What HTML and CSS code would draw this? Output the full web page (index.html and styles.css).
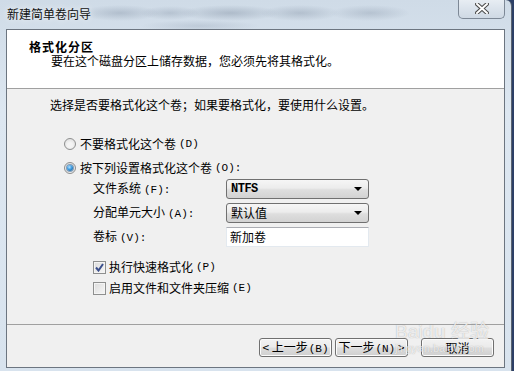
FILE: index.html
```html
<!DOCTYPE html>
<html lang="zh-CN">
<head>
<meta charset="utf-8">
<title>新建简单卷向导</title>
<link rel="stylesheet" href="styles.css">
</head>
<body>
<div class="win">
  <div class="titlebar">
    <span class="title">新建简单卷向导</span>
    <div class="close">
      <svg width="14" height="11" viewBox="0 0 14 11">
        <path d="M2 1 L12 10 M12 1 L2 10" stroke="#4a4a4a" stroke-width="4" stroke-linecap="square"/>
        <path d="M2 1 L12 10 M12 1 L2 10" stroke="#ffffff" stroke-width="2" stroke-linecap="square"/>
      </svg>
    </div>
  </div>
  <div class="client">
    <div class="header">
      <div class="h-title">格式化分区</div>
      <div class="h-sub">要在这个磁盘分区上储存数据，您必须先将其格式化。</div>
    </div>
    <div class="content">
      <p class="question">选择是否要格式化这个卷；如果要格式化，要使用什么设置。</p>
      <div class="opt-row r1"><span class="radio"></span>不要格式化这个卷<span class="ak">(D)</span></div>
      <div class="opt-row r2"><span class="radio checked"></span>按下列设置格式化这个卷<span class="ak">(O):</span></div>
      <div class="form">
        <div class="frow">
          <span class="label">文件系统<span class="ak">(F):</span></span>
          <div class="combo"><span class="ntfs">NTFS</span><span class="arrow"></span></div>
        </div>
        <div class="frow">
          <span class="label">分配单元大小<span class="ak">(A):</span></span>
          <div class="combo"><span class="sel">默认值</span><span class="arrow"></span></div>
        </div>
        <div class="frow">
          <span class="label">卷标<span class="ak">(V):</span></span>
          <div class="textbox">新加卷</div>
        </div>
      </div>
      <div class="opt-row c1"><span class="check checked"><svg width="9" height="9" viewBox="0 0 9 9"><path d="M1 4.5 L3.5 7.5 L8 1" fill="none" stroke="#3b4f8c" stroke-width="2"/></svg></span>执行快速格式化<span class="ak">(P)</span></div>
      <div class="opt-row c2"><span class="check"></span>启用文件和文件夹压缩<span class="ak">(E)</span></div>
    </div>
    <div class="footer">
      <button class="btn">&lt; 上一步<span class="ak">(B)</span></button>
      <button class="btn">下一步<span class="ak">(N)</span> &gt;</button>
      <button class="btn cancel">取消</button>
    </div>
  </div>
  <div class="watermark"><span class="wm1">Bai<b>du</b> 经验</span><span class="wm2">jingyan.baidu.com</span></div>
</div>
</body>
</html>
```

FILE: styles.css
```css
* { box-sizing: border-box; }
html, body { margin: 0; padding: 0; }
body {
  width: 514px;
  height: 371px;
  overflow: hidden;
  background: #2c3f66;
  font-family: "Noto Sans CJK SC", "Noto Sans", sans-serif;
  font-size: 12px;
  color: #000;
}
.win {
  position: relative;
  width: 512px;
  height: 371px;
  border-right: 1px solid #5b6470;
  border-top-right-radius: 6px;
  background:
    radial-gradient(ellipse 40px 8px at 120px 13px, rgba(120,135,155,0.35), transparent),
    radial-gradient(ellipse 30px 7px at 170px 13px, rgba(120,135,155,0.3), transparent),
    radial-gradient(ellipse 50px 8px at 230px 13px, rgba(110,125,145,0.35), transparent),
    radial-gradient(ellipse 40px 8px at 300px 13px, rgba(110,125,145,0.3), transparent),
    radial-gradient(ellipse 40px 8px at 370px 13px, rgba(120,135,155,0.3), transparent),
    radial-gradient(ellipse 60px 6px at 200px 26px, rgba(130,145,165,0.25), transparent),
    linear-gradient(180deg, #cfdbe7 0%, #dde7f1 30%, #d8e3ee 100%);
  display: flex;
  flex-direction: column;
}
.titlebar {
  height: 29px;
  position: relative;
  display: flex;
  align-items: center;
  padding-left: 7px;
}
.title {
  font-size: 12px;
  line-height: 14px;
  color: #111;
  margin-top: -1px;
  text-shadow: 0 0 6px rgba(255,255,255,0.9);
}
.close {
  position: absolute;
  left: 458px;
  top: -1px;
  width: 47px;
  height: 20px;
  border: 1px solid #7d8896;
  border-top: none;
  border-radius: 0 0 5px 5px;
  background: linear-gradient(180deg, #e9eef4 0%, #dbe3ec 50%, #cfd9e4 100%);
  display: flex;
  align-items: center;
  justify-content: center;
}
.client {
  margin-left: 6px;
  width: 499px;
  height: 339px;
  border: 1px solid #6c7580;
  background: #f0f0f0;
  display: flex;
  flex-direction: column;
}
.header {
  height: 59px;
  background: #fff;
  border-bottom: 1px solid #a0a0a0;
  padding: 10px 0 0 22px;
}
.h-title {
  font-weight: bold;
  font-size: 12px;
  line-height: 14px;
  letter-spacing: 1px;
}
.h-sub {
  line-height: 13px;
  padding-left: 22px;
}
.content {
  flex: 1;
  padding-left: 43px;
}
.question {
  margin: 9px 0 0 0;
  line-height: 14px;
}
.ak {
  font-family: "Liberation Mono", monospace;
  font-size: 11px;
  margin-left: 3px;
}
.opt-row {
  display: flex;
  align-items: center;
  height: 18px;
  line-height: 14px;
}
.r1 { margin: 23px 0 0 14px; }
.r2 { margin: 6px 0 0 14px; }
.c1 { margin: 11px 0 0 43px; }
.c2 { margin: 3px 0 0 43px; }
.radio {
  width: 12px;
  height: 12px;
  border-radius: 50%;
  border: 1px solid #8e8f8f;
  background: radial-gradient(circle at 50% 60%, #f4f4f4 30%, #d8d8d8 100%);
  margin-right: 4px;
  display: flex;
  align-items: center;
  justify-content: center;
}
.radio.checked::after {
  content: "";
  width: 6px;
  height: 6px;
  border-radius: 50%;
  background: radial-gradient(circle at 40% 35%, #b5e3ff 0%, #3c9ae0 45%, #17507e 100%);
  box-shadow: 0 0 0 1px rgba(30,80,130,0.5);
}
.check {
  width: 13px;
  height: 13px;
  border: 1px solid #8e8f8f;
  background: linear-gradient(135deg, #dcdcdc 0%, #f6f6f6 100%);
  box-shadow: inset 0 0 0 1px #f4f4f4;
  margin-right: 3px;
  display: flex;
  align-items: center;
  justify-content: center;
}
.form {
  margin: 2px 0 0 43px;
  display: flex;
  flex-direction: column;
  gap: 4px;
}
.frow {
  display: flex;
  align-items: center;
  height: 20px;
}
.label {
  width: 133px;
  line-height: 14px;
}
.combo {
  width: 143px;
  height: 20px;
  border: 1px solid #707070;
  border-radius: 3px;
  background: linear-gradient(180deg, #f6f6f6 0%, #ececec 45%, #dedede 55%, #d2d2d2 100%);
  display: flex;
  align-items: center;
  padding: 0 6px 0 4px;
}
.combo .ntfs {
  font-family: "Liberation Mono", monospace;
  font-weight: bold;
  font-size: 12px;
  letter-spacing: -0.5px;
}
.combo .sel {
  line-height: 14px;
}
.arrow {
  margin-left: auto;
  width: 0;
  height: 0;
  border-left: 4px solid transparent;
  border-right: 4px solid transparent;
  border-top: 4px solid #000;
}
.textbox {
  width: 143px;
  height: 20px;
  background: #fff;
  border: 1px solid #e3e9ef;
  border-top-color: #abadb3;
  line-height: 17px;
  padding-left: 3px;
}
.footer {
  height: 43px;
  border-top: 1px solid #a0a0a0;
  display: flex;
  justify-content: flex-end;
  align-items: flex-start;
  padding: 13px 10px 0 0;
}
.btn {
  width: 73px;
  height: 19px;
  font-family: "Noto Sans CJK SC", "Noto Sans", sans-serif;
  font-size: 12px;
  line-height: 14px;
  padding: 0;
  color: #000;
  border: 1px solid #707070;
  border-radius: 3px;
  background: linear-gradient(180deg, #f2f2f2 0%, #ebebeb 45%, #dddddd 55%, #cfcfcf 100%);
  box-shadow: inset 0 0 0 1px #fcfcfc;
  margin-left: 3px;
}
.btn .ak { margin-left: 1px; }
.btn.cancel { margin-left: 13px; }
.watermark {
  position: absolute;
  left: 395px;
  top: 322px;
  display: flex;
  flex-direction: column;
  color: rgba(255,255,255,0.75);
  text-shadow: 0 0 1px rgba(120,120,120,0.6);
  pointer-events: none;
}
.wm1 {
  font-family: "Liberation Sans", sans-serif;
  font-size: 19px;
  line-height: 20px;
}
.wm1 b { font-weight: bold; }
.wm2 {
  font-family: "Liberation Sans", sans-serif;
  font-size: 11px;
  line-height: 12px;
  margin-left: 0;
}
```
